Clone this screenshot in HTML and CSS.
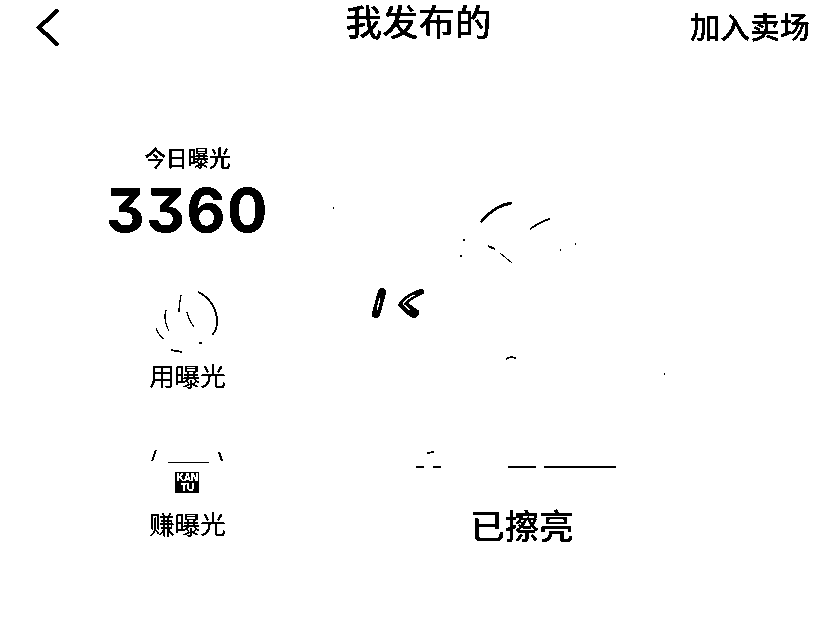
FILE: index.html
```html
<!DOCTYPE html>
<html lang="zh-CN">
<head>
  <meta charset="UTF-8" />
  <meta name="viewport" content="width=device-width, initial-scale=1.0"/>
  <title>我发布的</title>
  <link rel="stylesheet" href="styles.css">
</head>
<body>
  <svg class="defs" width="0" height="0" aria-hidden="true">
    <filter id="mono" color-interpolation-filters="sRGB" x="0" y="0" width="100%" height="100%">
      <feColorMatrix type="saturate" values="0"/>
      <feComponentTransfer>
        <feFuncR type="discrete" tableValues="0 0 1"/>
        <feFuncG type="discrete" tableValues="0 0 1"/>
        <feFuncB type="discrete" tableValues="0 0 1"/>
      </feComponentTransfer>
    </filter>
  </svg>

  <div class="page">
    <header class="topbar">
      <svg class="back" width="30" height="40" viewBox="0 0 30 40">
        <path d="M25 2 L6 19.5 L25 37"/>
      </svg>
      <h1 class="title">我发布的</h1>
      <a class="join">加入卖场</a>
    </header>

    <main class="content">
      <section class="stats">
        <div class="today">今日曝光</div>
        <div class="count">3360</div>

        <div class="action action-use">
          <svg class="flame" width="70" height="68" viewBox="153 288 70 68">
            <path class="thin" d="M199 292 C210 297 218 308 218 322 C218 328 216 332 213 335"/>
            <path class="hair" d="M167 310 C165 316 166 324 170 331"/>
            <path class="hair" d="M182 295 C181 301 180 307 180 312"/>
            <path class="hair" d="M188 312 C189 318 192 323 195 327"/>
            <path class="hair" d="M157 328 C159 333 161 337 165 339"/>
            <path class="thin" d="M172 350 L183 352"/>
            <path class="hair" d="M200 343 L203 343"/>
          </svg>
          <div class="action-label">用曝光</div>
        </div>

        <div class="action action-earn">
          <div class="shop">
            <svg class="awning" width="74" height="14" viewBox="149 449 74 14">
              <path class="thin" d="M155 450 L151 461"/>
              <path class="thin" d="M218 452 L221 461"/>
              <path class="hair" d="M167 462.5 L208 462.5"/>
              <path class="thin" d="M173 462.5 L195 462.5"/>
            </svg>
            <div class="badge">KAN<br>TU</div>
          </div>
          <div class="action-label">赚曝光</div>
        </div>
      </section>

      <section class="status">已擦亮</section>
    </main>

    <svg class="scraps" width="836" height="638" viewBox="0 0 836 638" aria-hidden="true">
      <path class="thick" d="M481 222 C488 214 497 205 512 203"/>
      <path class="thin" d="M530 229 C536 225 543 220 550 219"/>
      <path class="thin" d="M488 246 L495 249"/>
      <path class="hair" d="M500 253 L512 263"/>
      <path class="thin" d="M506 359 C509 357 513 357 516 358"/>
      <path class="thin" d="M427 453 L434 452"/>
      <path class="hair" d="M416 467 H424 M433 467 H441 M508 467 H536 M544 467 H616"/>
      <path class="thin" d="M593 466.5 H600"/>
      <path class="hair" d="M333 208 h1 M463 240 h2 M460 256 h2 M560 250 h1 M575 244 h1 M664 374 h1"/>
      <path class="pill" d="M382 292 L376 314"/>
      <path class="slit" d="M380 298 L377 310"/>
      <path class="blob" d="M421 289 C424 289 425 292 423 294 C417 297 410 300 408 303 L419 311 C420 314 417 319 413 318 C407 315 402 310 398 305 C402 297 411 292 421 289 Z"/>
      <path class="slit" d="M415 295 C410 297 405 300 403 304 L410 310"/>
    </svg>
  </div>
</body>
</html>
```

FILE: styles.css
```css
* {
  box-sizing: border-box;
}
body {
  margin: 0;
  background: white;
  color: black;
  font-family: "Noto Sans CJK SC", "Noto Sans", sans-serif;
}
.defs {
  position: absolute;
}
.page {
  position: relative;
  height: 638px;
  overflow: hidden;
  background: white;
  filter: url(#mono);
}

.topbar {
  display: flex;
  align-items: flex-start;
  height: 54px;
  padding-left: 33px;
}
.back {
  margin-top: 8px;
}
.back path {
  stroke-width: 4;
}
.title {
  margin: 1px 0 0 282.5px;
  font-size: 36.5px;
  font-weight: 500;
  line-height: 40px;
}
.join {
  margin: 1px 0 0 198.5px;
  font-size: 30px;
  font-weight: 500;
  line-height: 48px;
}

.content {
  display: grid;
  grid-template-columns: 375px 294px;
  padding-top: 88px;
}
.stats {
  display: flex;
  flex-direction: column;
  align-items: center;
}
.today {
  font-size: 21.5px;
  font-weight: 500;
  line-height: 30px;
  margin-bottom: 5px;
}
.count {
  font-family: Inter, "Liberation Sans", sans-serif;
  font-feature-settings: "cv09";
  font-size: 60px;
  font-weight: 700;
  letter-spacing: 1.5px;
  line-height: 66px;
}
.action {
  display: flex;
  flex-direction: column;
  align-items: center;
}
.action-use {
  margin-top: 45px;
}
.action-earn {
  margin-top: 57px;
}
.action-label {
  font-size: 25.5px;
  line-height: 34px;
}
.flame {
  display: block;
  margin-bottom: 2px;
}
.shop {
  display: flex;
  flex-direction: column;
  align-items: center;
  margin-bottom: 13px;
}
.awning {
  display: block;
  margin-bottom: 9px;
}
.badge {
  width: 24px;
  height: 21px;
  background: black;
  color: white;
  font-family: "Liberation Sans", sans-serif;
  font-size: 10px;
  font-weight: 700;
  line-height: 10px;
  text-align: center;
  padding-top: 1px;
  -webkit-text-stroke: 0.4px white;
}
.status {
  align-self: end;
  font-size: 34.5px;
  font-weight: 500;
  line-height: 46px;
  text-align: center;
  margin-bottom: -7px;
}

.scraps {
  position: absolute;
  top: 0;
  left: 0;
  pointer-events: none;
}
svg path {
  fill: none;
  stroke: black;
}
.hair {
  stroke-width: 1;
}
.thin {
  stroke-width: 1.6;
}
.thick {
  stroke-width: 2.6;
}
.pill {
  stroke-width: 8;
  stroke-linecap: round;
}
svg .blob {
  fill: black;
  stroke: none;
}
svg .slit {
  stroke: white;
  stroke-width: 1.6;
}
```
